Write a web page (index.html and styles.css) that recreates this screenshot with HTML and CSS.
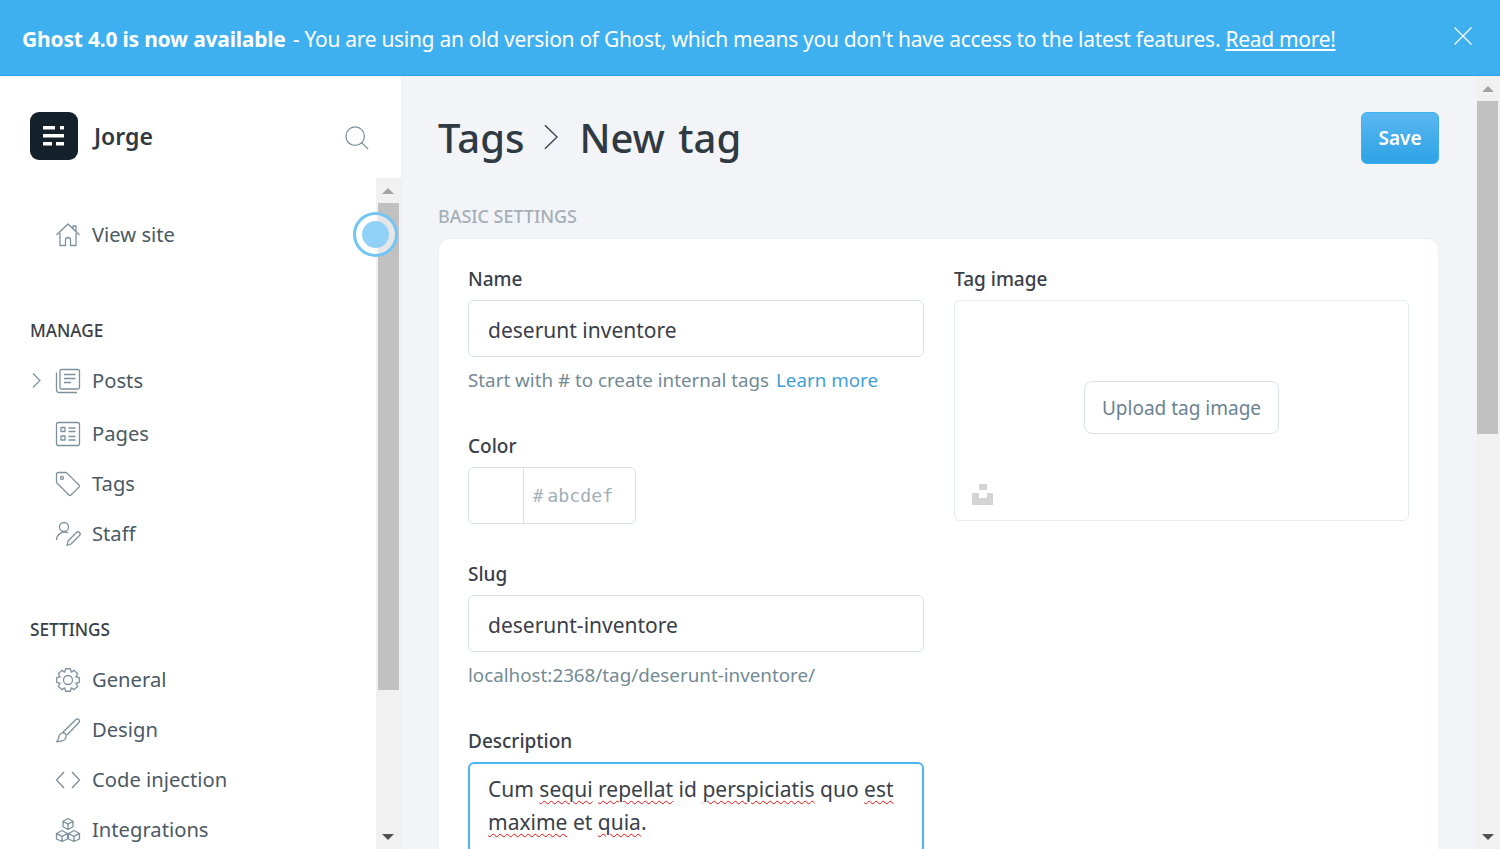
FILE: index.html
```html
<!DOCTYPE html>
<html lang="en">
<head>
  <meta charset="UTF-8">
  <title>New tag</title>
  <link rel="stylesheet" href="styles.css">
</head>
<body>
  <div class="banner">
    <p class="banner-text"><strong>Ghost 4.0 is now available</strong> - You are using an old version of Ghost, which means you don't have access to the latest features. <a href="#">Read more!</a></p>
    <svg class="banner-close" width="18" height="18" viewBox="0 0 18 18"><path d="M0.5 0.5 17.5 17.5M17.5 0.5 0.5 17.5"/></svg>
  </div>

  <div class="app">
    <aside class="sidebar">
      <div class="brand">
        <div class="brand-logo">
          <svg width="48" height="48" viewBox="0 0 48 48"><path d="M13 14h12v3.500H13zM30 14h4v3.500h-4zM13 22h21v3.500H13zM13 30h9v3.500h-9zM26 30h8v3.500h-8z"/></svg>
        </div>
        <span class="brand-name">Jorge</span>
        <svg class="brand-search" width="24" height="24" viewBox="0 0 26 26"><circle cx="11" cy="11" r="10"/><path d="M18 18 25 25"/></svg>
      </div>

      <div class="nav-wrap">
        <nav class="nav">
          <a class="nav-item nav-top" href="#">
            <span class="caret"></span>
            <svg class="icon" viewBox="0 0 24 24"><path d="M.5 12 12 1l11.500 11M17 5.500V3h3v5.500M4 10v12.500h5.500V17a2.500 2.500 0 0 1 5 0v5.500H20V10"/></svg>
            View site
          </a>

          <h4 class="nav-title">MANAGE</h4>
          <a class="nav-item nav-posts" href="#">
            <span class="caret"><svg width="9" height="15" viewBox="0 0 9 15"><path d="M1 .5 8 7.500 1 14.500"/></svg></span>
            <svg class="icon" viewBox="0 0 24 24"><rect x="4" y=".5" width="19.500" height="19.500" rx="1.500"/><path d="M8 5.500h11.500M8 9.500h11.500M8 13.500h7M.5 3.500V21a2.500 2.500 0 0 0 2.500 2.500h18"/></svg>
            Posts
          </a>
          <a class="nav-item" href="#">
            <span class="caret"></span>
            <svg class="icon" viewBox="0 0 24 24"><rect x=".5" y=".5" width="23" height="23" rx="2"/><rect x="5" y="5.500" width="4" height="4"/><rect x="5" y="14" width="4" height="4"/><path d="M12.500 6h7M12.500 9.500h7M12.500 14.500h7M12.500 18h7"/></svg>
            Pages
          </a>
          <a class="nav-item" href="#">
            <span class="caret"></span>
            <svg class="icon" viewBox="0 0 24 24"><path d="M2 .5h7.500a2 2 0 0 1 1.500.6L23 13a1.500 1.500 0 0 1 0 2.100L15 23a1.500 1.500 0 0 1-2.100 0L1 11a2 2 0 0 1-.5-1.500V2A1.500 1.500 0 0 1 2 .5z"/><circle cx="6" cy="6" r="1.500"/></svg>
            Tags
          </a>
          <a class="nav-item" href="#">
            <span class="caret"></span>
            <svg class="icon" viewBox="0 0 24 24"><circle cx="8" cy="5" r="4.500"/><path d="M.5 18a8 8 0 0 1 11.500-7M11 23.500l1-4.500 8.500-8.500a2 2 0 0 1 3 3L15 22z"/></svg>
            Staff
          </a>

          <h4 class="nav-title">SETTINGS</h4>
          <a class="nav-item" href="#">
            <span class="caret"></span>
            <svg class="icon" viewBox="0 0 24 24"><path d="M23.250 9.610V14.390L19.850 15.250 21.650 18.260 18.260 21.650 15.250 19.850 14.390 23.250H9.610L8.750 19.850 5.740 21.650 2.350 18.260 4.150 15.250.75 14.390V9.610L4.150 8.750 2.350 5.740 5.740 2.350 8.750 4.150 9.610.75H14.390L15.250 4.150 18.260 2.350 21.650 5.740 19.850 8.750Z"/><circle cx="12" cy="12" r="4.500"/></svg>
            General
          </a>
          <a class="nav-item" href="#">
            <span class="caret"></span>
            <svg class="icon" viewBox="0 0 24 24"><path d="M.5 23.500c2-1 2-3 2.500-5 .5-2 2.500-4 5-3.500 2.500.5 2.500 3.500 1.500 5.500-1 2-5 3.500-9 3zM6.500 14.500 20 1.500c1-1 3.500-.5 3.500 1.500 0 1-.5 1.500-1 2L11 17"/></svg>
            Design
          </a>
          <a class="nav-item" href="#">
            <span class="caret"></span>
            <svg class="icon" viewBox="0 0 24 24"><path d="M8 4 .5 12 8 20M16 4l7.500 8L16 20"/></svg>
            Code injection
          </a>
          <a class="nav-item" href="#">
            <span class="caret"></span>
            <svg class="icon" viewBox="0 0 24 24"><path d="M12 .5l5 2.800v5.400l-5 2.800-5-2.800V3.300zM7 3.300l5 2.800 5-2.800M12 6.100v5.400M6 12.500l5.500 3v5.500L6 23.500.5 21v-5.500zM.5 15.500 6 18.300l5.500-2.800M6 18.300v5.200M18 12.500l5.500 3v5.500L18 23.500 12.500 21v-5.500zM12.500 15.500 18 18.300l5.500-2.800M18 18.300v5.200"/></svg>
            Integrations
          </a>
        </nav>

        <div class="scrollbar scrollbar-nav">
          <span class="scroll-btn"><i class="arrow-up"></i></span>
          <span class="scroll-thumb thumb-nav"></span>
          <span class="scroll-rest"></span>
          <span class="scroll-btn"><i class="arrow-down"></i></span>
        </div>
        <span class="pulse"><i></i></span>
      </div>
    </aside>

    <main class="main">
      <div class="content">
        <header class="page-head">
          <h1 class="page-title">
            Tags
            <svg width="14" height="26" viewBox="0 0 15 26"><path d="M1 .5 14 13 1 25.500"/></svg>
            New tag
          </h1>
          <button class="btn-save">Save</button>
        </header>

        <h3 class="section-title">BASIC SETTINGS</h3>

        <section class="card">
          <div class="col">
            <label class="field-label">Name</label>
            <div class="input">deserunt inventore</div>
            <p class="hint">Start with # to create internal tags <a href="#">Learn more</a></p>

            <label class="field-label label-color">Color</label>
            <div class="color-input">
              <span class="color-swatch"></span>
              <span class="color-hash">#</span>
              <span class="color-value">abcdef</span>
            </div>

            <label class="field-label label-slug">Slug</label>
            <div class="input">deserunt-inventore</div>
            <p class="hint">localhost:2368/tag/deserunt-inventore/</p>

            <label class="field-label label-color">Description</label>
            <div class="textarea">Cum <u>sequi</u> <u>repellat</u> id <u>perspiciatis</u> quo <u>est</u> <u>maxime</u> et <u>quia</u>.</div>
          </div>

          <div class="col">
            <label class="field-label">Tag image</label>
            <div class="image-box">
              <button class="btn-upload">Upload tag image</button>
              <svg class="unsplash" width="22" height="22" viewBox="0 0 22 22"><path d="M8 0h8v6H8zM1 9h7v5h8V9h7v12H1z"/></svg>
            </div>
          </div>
        </section>
      </div>

      <div class="scrollbar scrollbar-main">
        <span class="scroll-btn"><i class="arrow-up"></i></span>
        <span class="scroll-thumb thumb-main"></span>
        <span class="scroll-rest"></span>
        <span class="scroll-btn"><i class="arrow-down"></i></span>
      </div>
    </main>
  </div>
</body>
</html>
```

FILE: styles.css
```css
* { box-sizing: border-box; }
html, body { margin: 0; height: 100%; overflow: hidden; }
body { font-family: "Noto Sans", "Open Sans", sans-serif; color: #394047; background-color: #fff; display: flex; flex-direction: column; }
a { color: inherit; text-decoration: none; }
p, h1, h3, h4 { margin: 0; }

/* banner */
.banner {
  flex: none;
  height: 76px;
  background-color: #3eb0ef;
  border-bottom: 1px solid #2d9fe3;
  color: #fff;
  display: flex;
  align-items: center;
  justify-content: space-between;
  padding: 2px 28px 0 22px;
}
.banner-text { font-size: 21px; letter-spacing: -0.3px; white-space: nowrap; }
.banner-text strong { letter-spacing: -0.2px; margin-right: 2px; }
.banner-text a { text-decoration: underline; }
.banner-close { margin-bottom: 6px; }
.banner-close path { stroke: #fff; stroke-width: 1.2; fill: none; }

.app { flex: 1; display: flex; min-height: 0; }

/* sidebar */
.sidebar { flex: none; width: 402px; background-color: #fff; border-right: 1px solid #eceef2; display: flex; flex-direction: column; }
.brand { flex: none; height: 102px; display: flex; align-items: center; padding: 36px 32px 18px 30px; }
.brand-logo { width: 48px; height: 48px; border-radius: 9px; background-color: #15212a; }
.brand-logo svg { display: block; }
.brand-logo path { fill: #fff; }
.brand-name { margin-left: 16px; font-size: 23px; font-weight: 600; color: #2f3a42; }
.brand-search { margin: 4px 0 0 auto; }
.brand-search circle, .brand-search path { stroke: #7d909e; stroke-width: 1.4; fill: none; }

.nav-wrap { flex: 1; display: flex; min-height: 0; position: relative; }
.nav { flex: 1; overflow: hidden; padding-top: 32px; }
.nav-item { display: flex; align-items: center; height: 50px; padding: 0 0 2px 30px; font-size: 20.2px; color: #4b5a64; }
.nav-posts { margin-bottom: 3px; }
.nav-title { margin: 61px 0 15px 30px; height: 20px; line-height: 20px; font-size: 17.2px; font-weight: 500; color: #394047; }
.caret { flex: none; width: 26px; display: flex; padding-left: 2px; }
.caret path { stroke: #7d909e; stroke-width: 1.2; fill: none; }
.icon { flex: none; width: 24px; height: 24px; margin: 2px 12px 0 0; overflow: visible; }
.icon path, .icon rect, .icon circle { stroke: #7d909e; stroke-width: 1.3; fill: none; stroke-linejoin: round; }

.pulse {
  position: absolute;
  left: 353px;
  top: 34px;
  width: 45px;
  height: 45px;
  border-radius: 50%;
  border: 3px solid #74c5f4;
  background-color: rgba(255, 255, 255, 0.6);
  display: flex;
  align-items: center;
  justify-content: center;
}
.pulse i { width: 27px; height: 27px; border-radius: 50%; background-color: #92d1f7; }

/* scrollbars */
.scrollbar { flex: none; display: flex; flex-direction: column; background-color: #f1f1f1; }
.scrollbar-nav { width: 25px; padding: 0 2px; }
.scrollbar-nav .scroll-btn { padding-right: 1px; }
.scrollbar-main { width: 24px; padding: 0 2px 0 1px; }
.scroll-btn { flex: none; height: 25px; display: flex; align-items: center; justify-content: center; }
.scroll-thumb { flex: none; background-color: #c1c1c1; }
.thumb-nav { height: 487px; }
.thumb-main { height: 333px; }
.scroll-rest { flex: 1; }
.arrow-up { width: 0; height: 0; border: 6px solid transparent; border-top: 0; border-bottom: 6px solid #a3a3a3; }
.arrow-down { width: 0; height: 0; border: 6px solid transparent; border-bottom: 0; border-top: 6px solid #505050; }

/* main */
.main { flex: 1; display: flex; min-width: 0; background-color: #f3f4f8; }
.content { flex: 1; min-width: 0; overflow: hidden; padding: 36px 37px 0 36px; }
.page-head { display: flex; align-items: center; justify-content: space-between; height: 52px; }
.page-title { display: flex; align-items: center; padding-bottom: 2px; font-size: 40px; font-weight: 500; color: #2f3a42; word-spacing: 3px; }
.page-title svg { margin: 0 21px 0 20px; }
.page-title path { stroke: #394047; stroke-width: 1.4; fill: none; }
.btn-save {
  width: 78px;
  height: 52px;
  border: 1px solid #3eb0ef;
  border-radius: 6px;
  background: linear-gradient(#5ab7f0, #2da3e6);
  color: #fff;
  font-family: inherit;
  font-size: 19px;
  font-weight: 600;
}
.section-title { margin-top: 42px; height: 20px; line-height: 20px; font-size: 17.9px; font-weight: 500; color: #a4afb8; }

.card {
  margin-top: 12px;
  background-color: #fff;
  border: 1px solid #ebeef2;
  border-radius: 12px;
  padding: 29px 29px 40px;
  display: grid;
  grid-template-columns: 456px 455px;
  column-gap: 30px;
}
.col { display: flex; flex-direction: column; align-items: flex-start; }
.field-label { height: 22px; line-height: 22px; font-size: 19px; font-weight: 500; color: #394047; margin-bottom: 10px; }
.label-color { margin-top: 43px; }
.label-slug { margin-top: 39px; }
.input {
  width: 100%;
  height: 57px;
  border: 1px solid #dae2e9;
  border-radius: 6px;
  padding: 2px 19px 0;
  display: flex;
  align-items: center;
  font-size: 21px;
  color: #394047;
}
.hint { margin-top: 11px; height: 24px; line-height: 24px; font-size: 18.8px; color: #738a94; white-space: nowrap; }
.hint a { color: #3f9fd8; margin-left: 2px; }

.color-input { width: 168px; height: 57px; border: 1px solid #dae2e9; border-radius: 6px; display: flex; align-items: center; }
.color-swatch { width: 55px; height: 100%; border-right: 1px solid #dae2e9; }
.color-hash, .color-value { font-family: "DejaVu Sans Mono", "Liberation Mono", monospace; font-size: 18.3px; color: #a4afb8; }
.color-hash { margin-left: 9px; margin-right: 4px; font-size: 17px; }

.textarea {
  width: 100%;
  height: 130px;
  border: 2px solid #4db5f2;
  border-radius: 6px;
  padding: 9px 18px;
  font-size: 21px;
  line-height: 33px;
  color: #394047;
}
.textarea u { text-decoration: underline wavy #f01010 1px; text-underline-offset: 3px; }

.image-box {
  position: relative;
  width: 100%;
  height: 221px;
  border: 1px solid #e6ebf0;
  border-radius: 6px;
  display: flex;
  align-items: center;
  justify-content: center;
  padding-bottom: 6px;
}
.btn-upload {
  width: 195px;
  height: 53px;
  background-color: #fff;
  border: 1px solid #dae2e9;
  border-radius: 8px;
  font-family: inherit;
  font-size: 19px;
  color: #6b8391;
}
.unsplash { position: absolute; left: 16px; bottom: 14px; }
.unsplash path { fill: #d4d4d4; }
```
